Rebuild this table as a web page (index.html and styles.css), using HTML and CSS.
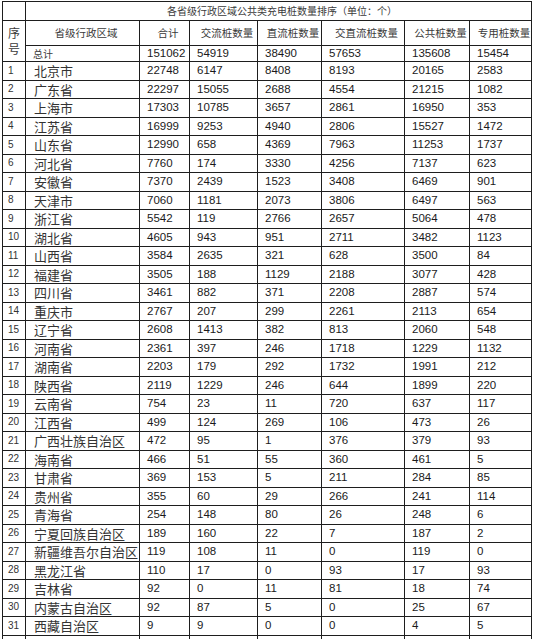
FILE: index.html
```html
<!DOCTYPE html>
<html lang="zh">
<head>
<meta charset="utf-8">
<title>各省级行政区域公共类充电桩数量排序</title>
<link rel="stylesheet" href="styles.css">
</head>
<body>
<table class="grid">
  <colgroup>
    <col class="c-seq"><col class="c-name"><col class="c-total"><col class="c-ac"><col class="c-dc"><col class="c-acdc"><col class="c-pub"><col class="c-pri">
  </colgroup>
  <thead>
    <tr class="r-title">
      <td></td>
      <td colspan="7" class="title">各省级行政区域公共类充电桩数量排序（单位：个）</td>
    </tr>
    <tr class="r-head">
      <td rowspan="2" class="seqhead">序<br>号</td>
      <td class="head">省级行政区域</td>
      <td class="head">合计</td>
      <td class="head">交流桩数量</td>
      <td class="head">直流桩数量</td>
      <td class="head">交直流桩数量</td>
      <td class="head">公共桩数量</td>
      <td class="head">专用桩数量</td>
    </tr>
    <tr class="r-sum">
      <td class="sum">总计</td>
      <td class="num">151062</td><td class="num">54919</td><td class="num">38490</td><td class="num">57653</td><td class="num">135608</td><td class="num">15454</td>
    </tr>
  </thead>
  <tbody class="data">
    <tr><td class="seq">1</td><td class="name">北京市</td><td class="num">22748</td><td class="num">6147</td><td class="num">8408</td><td class="num">8193</td><td class="num">20165</td><td class="num">2583</td></tr>
    <tr><td class="seq">2</td><td class="name">广东省</td><td class="num">22297</td><td class="num">15055</td><td class="num">2688</td><td class="num">4554</td><td class="num">21215</td><td class="num">1082</td></tr>
    <tr><td class="seq">3</td><td class="name">上海市</td><td class="num">17303</td><td class="num">10785</td><td class="num">3657</td><td class="num">2861</td><td class="num">16950</td><td class="num">353</td></tr>
    <tr><td class="seq">4</td><td class="name">江苏省</td><td class="num">16999</td><td class="num">9253</td><td class="num">4940</td><td class="num">2806</td><td class="num">15527</td><td class="num">1472</td></tr>
    <tr><td class="seq">5</td><td class="name">山东省</td><td class="num">12990</td><td class="num">658</td><td class="num">4369</td><td class="num">7963</td><td class="num">11253</td><td class="num">1737</td></tr>
    <tr><td class="seq">6</td><td class="name">河北省</td><td class="num">7760</td><td class="num">174</td><td class="num">3330</td><td class="num">4256</td><td class="num">7137</td><td class="num">623</td></tr>
    <tr><td class="seq">7</td><td class="name">安徽省</td><td class="num">7370</td><td class="num">2439</td><td class="num">1523</td><td class="num">3408</td><td class="num">6469</td><td class="num">901</td></tr>
    <tr><td class="seq">8</td><td class="name">天津市</td><td class="num">7060</td><td class="num">1181</td><td class="num">2073</td><td class="num">3806</td><td class="num">6497</td><td class="num">563</td></tr>
    <tr><td class="seq">9</td><td class="name">浙江省</td><td class="num">5542</td><td class="num">119</td><td class="num">2766</td><td class="num">2657</td><td class="num">5064</td><td class="num">478</td></tr>
    <tr><td class="seq">10</td><td class="name">湖北省</td><td class="num">4605</td><td class="num">943</td><td class="num">951</td><td class="num">2711</td><td class="num">3482</td><td class="num">1123</td></tr>
    <tr><td class="seq">11</td><td class="name">山西省</td><td class="num">3584</td><td class="num">2635</td><td class="num">321</td><td class="num">628</td><td class="num">3500</td><td class="num">84</td></tr>
    <tr><td class="seq">12</td><td class="name">福建省</td><td class="num">3505</td><td class="num">188</td><td class="num">1129</td><td class="num">2188</td><td class="num">3077</td><td class="num">428</td></tr>
    <tr><td class="seq">13</td><td class="name">四川省</td><td class="num">3461</td><td class="num">882</td><td class="num">371</td><td class="num">2208</td><td class="num">2887</td><td class="num">574</td></tr>
    <tr><td class="seq">14</td><td class="name">重庆市</td><td class="num">2767</td><td class="num">207</td><td class="num">299</td><td class="num">2261</td><td class="num">2113</td><td class="num">654</td></tr>
    <tr><td class="seq">15</td><td class="name">辽宁省</td><td class="num">2608</td><td class="num">1413</td><td class="num">382</td><td class="num">813</td><td class="num">2060</td><td class="num">548</td></tr>
    <tr><td class="seq">16</td><td class="name">河南省</td><td class="num">2361</td><td class="num">397</td><td class="num">246</td><td class="num">1718</td><td class="num">1229</td><td class="num">1132</td></tr>
    <tr><td class="seq">17</td><td class="name">湖南省</td><td class="num">2203</td><td class="num">179</td><td class="num">292</td><td class="num">1732</td><td class="num">1991</td><td class="num">212</td></tr>
    <tr><td class="seq">18</td><td class="name">陕西省</td><td class="num">2119</td><td class="num">1229</td><td class="num">246</td><td class="num">644</td><td class="num">1899</td><td class="num">220</td></tr>
    <tr><td class="seq">19</td><td class="name">云南省</td><td class="num">754</td><td class="num">23</td><td class="num">11</td><td class="num">720</td><td class="num">637</td><td class="num">117</td></tr>
    <tr><td class="seq">20</td><td class="name">江西省</td><td class="num">499</td><td class="num">124</td><td class="num">269</td><td class="num">106</td><td class="num">473</td><td class="num">26</td></tr>
    <tr><td class="seq">21</td><td class="name">广西壮族自治区</td><td class="num">472</td><td class="num">95</td><td class="num">1</td><td class="num">376</td><td class="num">379</td><td class="num">93</td></tr>
    <tr><td class="seq">22</td><td class="name">海南省</td><td class="num">466</td><td class="num">51</td><td class="num">55</td><td class="num">360</td><td class="num">461</td><td class="num">5</td></tr>
    <tr><td class="seq">23</td><td class="name">甘肃省</td><td class="num">369</td><td class="num">153</td><td class="num">5</td><td class="num">211</td><td class="num">284</td><td class="num">85</td></tr>
    <tr><td class="seq">24</td><td class="name">贵州省</td><td class="num">355</td><td class="num">60</td><td class="num">29</td><td class="num">266</td><td class="num">241</td><td class="num">114</td></tr>
    <tr><td class="seq">25</td><td class="name">青海省</td><td class="num">254</td><td class="num">148</td><td class="num">80</td><td class="num">26</td><td class="num">248</td><td class="num">6</td></tr>
    <tr><td class="seq">26</td><td class="name">宁夏回族自治区</td><td class="num">189</td><td class="num">160</td><td class="num">22</td><td class="num">7</td><td class="num">187</td><td class="num">2</td></tr>
    <tr><td class="seq">27</td><td class="name">新疆维吾尔自治区</td><td class="num">119</td><td class="num">108</td><td class="num">11</td><td class="num">0</td><td class="num">119</td><td class="num">0</td></tr>
    <tr><td class="seq">28</td><td class="name">黑龙江省</td><td class="num">110</td><td class="num">17</td><td class="num">0</td><td class="num">93</td><td class="num">17</td><td class="num">93</td></tr>
    <tr><td class="seq">29</td><td class="name">吉林省</td><td class="num">92</td><td class="num">0</td><td class="num">11</td><td class="num">81</td><td class="num">18</td><td class="num">74</td></tr>
    <tr><td class="seq">30</td><td class="name">内蒙古自治区</td><td class="num">92</td><td class="num">87</td><td class="num">5</td><td class="num">0</td><td class="num">25</td><td class="num">67</td></tr>
    <tr><td class="seq">31</td><td class="name">西藏自治区</td><td class="num">9</td><td class="num">9</td><td class="num">0</td><td class="num">0</td><td class="num">4</td><td class="num">5</td></tr>
    <tr class="r-more"><td></td><td></td><td></td><td></td><td></td><td></td><td></td><td></td></tr>
  </tbody>
</table>
</body>
</html>
```

FILE: styles.css
```css
html, body {
  margin: 0;
  padding: 0;
  background: #ffffff;
}

body {
  padding: 1px 0 0 2px;
  color: #1c1c1c;
  font-family: "Liberation Sans", "Noto Sans CJK SC", sans-serif;
}

.grid {
  border-collapse: collapse;
  table-layout: fixed;
  width: 529px;
}

.grid td {
  border: 1px solid #1e1e1e;
  padding: 0 0 0 7px;
  white-space: nowrap;
  overflow: hidden;
  vertical-align: middle;
  line-height: 1;
}

.c-seq { width: 23px; }
.c-name { width: 114px; }
.c-total { width: 50px; }
.c-ac { width: 68px; }
.c-dc { width: 64px; }
.c-acdc { width: 83px; }
.c-pub { width: 65px; }
.c-pri { width: 62px; }

.r-title { height: 19px; }
.r-head { height: 25px; }
.r-sum { height: 16px; }
.data tr { height: 18.5px; }
.r-more { height: 18px; }

.title {
  text-align: center;
  padding: 2px 0 0 0;
  font-family: "Noto Sans CJK SC", sans-serif;
  font-size: 10px;
  color: #3a3a3a;
}

.head {
  text-align: center;
  padding: 0;
  font-family: "Noto Sans CJK SC", sans-serif;
  font-size: 10.5px;
  color: #3a3a3a;
}

.grid .seqhead {
  padding: 0;
  text-align: center;
  font-family: "Noto Sans CJK SC", sans-serif;
  font-size: 12px;
  line-height: 16px;
  color: #3a3a3a;
}

.sum {
  font-family: "Noto Sans CJK SC", sans-serif;
  font-size: 10px;
  color: #3a3a3a;
  padding-left: 8px;
}

.grid .seq {
  padding-left: 5px;
  font-family: "Liberation Sans", sans-serif;
  font-size: 10px;
  color: #333;
}

.grid .name {
  padding-left: 8px;
  font-family: "Noto Sans CJK SC", sans-serif;
  font-size: 13px;
  color: #333;
}

.num {
  font-family: "Liberation Sans", sans-serif;
  font-size: 11.5px;
  color: #1a1a1a;
}
```
